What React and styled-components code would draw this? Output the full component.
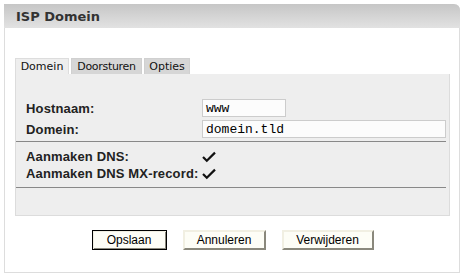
import React from 'react';
import styled, { createGlobalStyle } from 'styled-components';

const GlobalStyle = createGlobalStyle`
  html, body {
    margin: 0;
    padding: 0;
    background: #ffffff;
  }
`;

const Panel = styled.div`
  margin: 4px 0 0 4px;
  width: 456px;
  height: 269px;
  box-sizing: border-box;
  border: 1px solid #dddddd;
  border-top: none;
  border-top-right-radius: 6px;
  background: #ffffff;
`;

const Header = styled.div`
  height: 24px;
  margin: 0 -1px;
  padding-left: 12px;
  display: flex;
  align-items: center;
  background: linear-gradient(#c6c6c6, #e2e2e2);
  border-top-right-radius: 6px;
  font-family: "DejaVu Sans", Verdana, sans-serif;
  font-weight: bold;
  font-size: 13px;
  color: #333333;
`;

const Body = styled.div`
  padding: 30px 9px 0 10px;
`;

const Tabs = styled.div`
  display: flex;
  gap: 2px;
  height: 16px;
`;

const Tab = styled.div`
  width: ${(p) => p.$w}px;
  display: flex;
  align-items: center;
  justify-content: center;
  font-family: "DejaVu Sans", Verdana, sans-serif;
  font-size: 11px;
  letter-spacing: ${(p) => p.$ls || 0}px;
  color: #111111;
  background: ${(p) => (p.$active ? '#eeeeee' : '#d6d6d6')};
  border: 1px solid ${(p) => (p.$active ? '#dddddd' : '#d0d0d0')};
  border-bottom: none;
  box-sizing: border-box;
  white-space: nowrap;
`;

const Content = styled.div`
  height: 142px;
  box-sizing: border-box;
  background: #eeeeee;
  border: 1px solid #dcdcdc;
  border-top: none;
  padding: 25px 3px 0 0;
`;

const Row = styled.div`
  display: flex;
  align-items: center;
  height: ${(p) => p.$h || 18}px;
  margin-bottom: ${(p) => p.$mb || 0}px;
  padding-left: 10px;
`;

const Label = styled.div`
  width: 176px;
  flex: none;
  font-family: "Liberation Sans", Arial, sans-serif;
  font-weight: bold;
  font-size: 13px;
  letter-spacing: 0.15px;
  color: #222222;
`;

const Input = styled.div`
  width: ${(p) => p.$w}px;
  height: 18px;
  box-sizing: border-box;
  border: 1px solid #cccccc;
  background: #fcfcfc;
  padding: 0 3px;
  display: flex;
  align-items: center;
  font-family: "Liberation Mono", "Courier New", monospace;
  font-size: 13px;
  color: #000000;
`;

const Separator = styled.div`
  height: 1px;
  background: #888888;
  margin: ${(p) => p.$m};
`;

const Buttons = styled.div`
  display: flex;
  justify-content: center;
  gap: 16px;
  margin-top: 14px;
`;

const Button = styled.button`
  width: ${(p) => p.$w}px;
  height: 20px;
  box-sizing: border-box;
  padding: 0;
  font-family: "Liberation Sans", Arial, sans-serif;
  font-size: 12px;
  color: #000000;
  background: #fdfdf6;
  border: 2px solid;
  border-color: #f1efe2 #8a887c #8a887c #f1efe2;
  ${(p) =>
    p.$default &&
    `
    border: 1px solid #000000;
    box-shadow: inset 1px 1px 0 #f1efe2, inset -1px -1px 0 #8a887c;
  `}
`;

const Check = () => (
  <svg width="16" height="14" viewBox="0 0 16 14" style={{ marginLeft: -1 }}>
    <path d="M2 7 L5.8 10.8 L14 2.6" fill="none" stroke="#111" strokeWidth="2.2" />
  </svg>
);

export default function App() {
  return (
    <>
      <GlobalStyle />
      <Panel>
        <Header>ISP Domein</Header>
        <Body>
          <Tabs>
            <Tab $active $w={54}>Domein</Tab>
            <Tab $w={71} $ls={-0.3}>Doorsturen</Tab>
            <Tab $w={46}>Opties</Tab>
          </Tabs>
          <Content>
            <Row $mb={3}>
              <Label>Hostnaam:</Label>
              <Input $w={84}>www</Input>
            </Row>
            <Row $mb={3}>
              <Label>Domein:</Label>
              <Input $w={244}>domein.tld</Input>
            </Row>
            <Separator $m="0 0 6px 0" />
            <Row $h={17}>
              <Label>Aanmaken DNS:</Label>
              <Check />
            </Row>
            <Row $h={17}>
              <Label>Aanmaken DNS MX-record:</Label>
              <Check />
            </Row>
            <Separator $m="5px 0 0 0" />
          </Content>
          <Buttons>
            <Button $w={75} $default>Opslaan</Button>
            <Button $w={83}>Annuleren</Button>
            <Button $w={92}>Verwijderen</Button>
          </Buttons>
        </Body>
      </Panel>
    </>
  );
}
